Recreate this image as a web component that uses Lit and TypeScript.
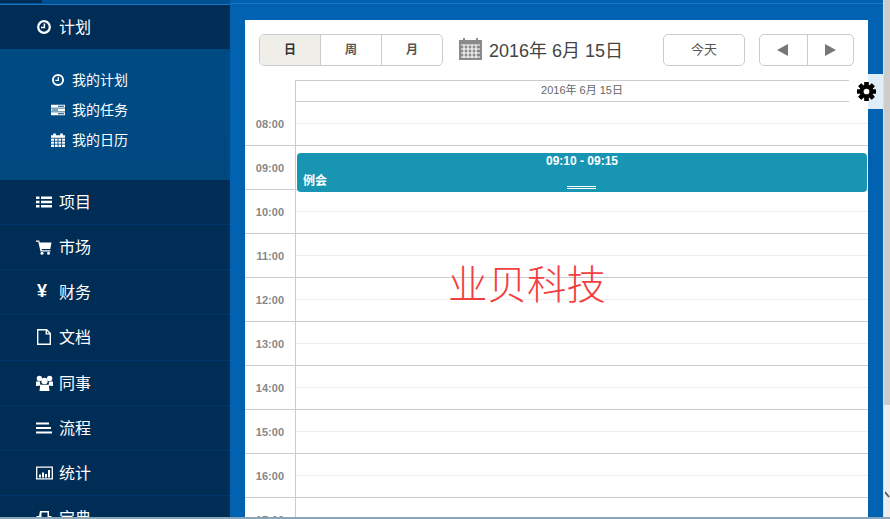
import { LitElement, html, css, svg } from "lit";
import { customElement } from "lit/decorators.js";

const clock = svg`<circle cx="8" cy="8" r="5.8" fill="none" stroke="#fff" stroke-width="2.2"/><path d="M8.400 4.500v4H5" fill="none" stroke="#fff" stroke-width="1.500"/>`;
const list = svg`<path fill="#fff" d="M0 2.500h3.500V5H0zM5 2.500h11V5H5zM0 6.800h3.500v2.500H0zM5 6.800h11v2.500H5zM0 11h3.500v2.500H0zM5 11h11v2.500H5z"/>`;
const cart = svg`<path fill="#fff" d="M0 1.500h3.200l.6 2H15.500l-1.200 6.500H5.700l.3 1.300H14.500v1.200H4.500L2.300 2.800H0z"/><circle cx="6" cy="14.300" r="1.500" fill="#fff"/><circle cx="12.500" cy="14.300" r="1.500" fill="#fff"/>`;
const doc = svg`<path fill="none" stroke="#fff" stroke-width="1.400" d="M1.700.7h9l3.600 3.800v10.800H1.700zM10.300.7v4.200h4"/>`;
const users = svg`<circle cx="3.400" cy="3.500" r="2.700" fill="#fff"/><circle cx="13.600" cy="3.500" r="2.700" fill="#fff"/><circle cx="8.500" cy="6" r="3.200" fill="#fff"/><path fill="#fff" d="M0 6.500h3.800L4.500 10.500 0 11zM13.200 6.500H17V11l-4.500-.5zM4.300 9.800h8.400l.8 6.200H3.500z"/>`;
const lines = svg`<path fill="#fff" d="M0 2.500h13v2H0zM0 7h15v2H0zM0 11.500h16v2H0z"/>`;
const chart = svg`<path fill="none" stroke="#fff" stroke-width="1.300" d="M.7 2.200h15.600v11.600H.7z"/><path fill="#fff" d="M3 9.500h2v3H3zM6 7.500h2v5H6zM9 9h2v3.500H9zM12 5h2v7.500h-2z"/>`;
const book = svg`<path fill="#fff" d="M4 1h9v5h2.500v7H.5V6H3zM5.500 2.500V8h6V2.500z"/>`;
const tasks = svg`<path fill="#fff" d="M0 2h16v3.400H0zM0 6.300h16v3.400H0zM0 10.600h16V14H0z"/><path stroke="#004a84" stroke-width="1.200" d="M8 3.700h7M1 8h7M8 12.300h7"/>`;
const cal = svg`<path fill="#fff" d="M0 2.500h2.500V.5h3v2h5v-2h3v2H16V16H0z"/><path stroke="#004a84" stroke-width="1" d="M0 6h16M0 9.400h16M0 12.800h16M4 6V16M8 6V16M12 6V16"/>`;

const HOURS = ["08:00", "09:00", "10:00", "11:00", "12:00", "13:00", "14:00", "15:00", "16:00", "17:00"];
const MENU = [
  { icon: list, label: "项目" },
  { icon: cart, label: "市场" },
  { yen: true, label: "财务" },
  { icon: doc, label: "文档" },
  { icon: users, label: "同事" },
  { icon: lines, label: "流程" },
  { icon: chart, label: "统计" },
  { icon: book, label: "宝典" },
];
const SUB = [
  { icon: clock, label: "我的计划" },
  { icon: tasks, label: "我的任务" },
  { icon: cal, label: "我的日历" },
];
const TEETH = [0, 45, 90, 135, 180, 225, 270, 315];

@customElement("app-root")
export class AppRoot extends LitElement {
  static styles = css`
    :host {
      display: block;
      width: 890px;
      height: 519px;
      overflow: hidden;
      position: relative;
      background: #0062b1;
      font-family: "Liberation Sans", "Noto Sans CJK SC", sans-serif;
    }
    .frame { display: flex; height: 517px; overflow: hidden; }
    .bottom { height: 2px; background: #8aa4b8; }
    .side { width: 230px; flex: none; display: flex; flex-direction: column; overflow: hidden; background: #002d56; }
    .topstrip { height: 5px; flex: none; background: #004f90; border-bottom: 1px solid #1a76c0; box-sizing: border-box; }
    .topstrip i { display: block; width: 42px; height: 3px; background: #002d56; }
    .head, .item {
      flex: none; display: flex; align-items: center; box-sizing: border-box;
      padding-left: 36px; color: #fff; font-size: 16px; gap: 7px;
    }
    .head { height: 44px; }
    .item { height: 45.150px; border-bottom: 1px solid #00386b; }
    .lab { padding-bottom: 2px; }
    .ic { width: 16px; height: 16px; flex: none; overflow: visible; }
    .yen { width: 16px; font: bold 18px "Liberation Sans", sans-serif; color: #fff; padding: 0 0 1px 1px; box-sizing: border-box; }
    .sub {
      flex: none; height: 131px; box-sizing: border-box; padding-top: 16px;
      background: linear-gradient(#004a84, #00497f);
    }
    .sub div { height: 30px; display: flex; align-items: center; padding-left: 51px; gap: 7px; color: #fff; font-size: 14px; }
    .sub .ic { width: 14px; height: 14px; }
    .main { flex: 1; min-width: 0; padding: 16px 22px 0 15px; display: flex; border-top: 1px solid #1a76c0; margin-top: 3px; box-sizing: border-box; }
    .card { flex: 1; background: #fff; padding-top: 14px; overflow: hidden; }
    .bar { display: flex; align-items: center; height: 32px; padding: 0 14px; margin-bottom: 14px; color: #444; }
    .group { display: flex; border: 1px solid #ccc; border-radius: 5px; height: 32px; box-sizing: border-box; overflow: hidden; }
    .group span { display: flex; align-items: center; justify-content: center; font-size: 12px; font-weight: bold; color: #555; border-left: 1px solid #ccc; box-sizing: border-box; padding-bottom: 3px; }
    .group span:first-child { border-left: 0; }
    .mode { width: 184px; }
    .mode span { flex: 1; }
    .mode span.on { background: #f0eee9; color: #333; }
    .title { display: flex; align-items: center; gap: 7px; margin-left: 16px; font-size: 18px; color: #444; flex: 1; }
    .title b { font-weight: normal; padding-bottom: 3px; }
    .title svg { margin-bottom: 2px; }
    .today { width: 82px; }
    .today span { width: 100%; font-weight: normal; font-size: 13px; color: #555; }
    .nav { width: 95px; margin-left: 14px; }
    .nav span { width: 47px; padding-bottom: 0; }
    .colhead { margin-left: 50px; height: 22px; box-sizing: border-box; border: solid #ccc; border-width: 1px 0 1px 1px; display: flex; align-items: center; justify-content: center; font-size: 11px; color: #666; padding-bottom: 4px; }
    .rows { position: relative; }
    .row { display: flex; height: 44px; box-sizing: border-box; border-bottom: 1px solid #ccc; }
    .hr { width: 50px; flex: none; display: flex; align-items: center; justify-content: flex-end; padding-right: 11px; box-sizing: border-box; font-size: 11px; font-weight: bold; color: #888; }
    .slot { flex: 1; border-left: 1px solid #ccc; display: flex; flex-direction: column; }
    .slot i { display: block; height: 22px; box-sizing: border-box; border-bottom: 1px solid #eee; }
    .event {
      position: absolute; left: 52px; right: 1px; top: 51px; height: 39px; box-sizing: border-box;
      background: #1895b2; border-radius: 4px; color: #fff; font-size: 12px; font-weight: bold;
    }
    .event .t { position: absolute; left: 0; right: 0; top: 1px; text-align: center; }
    .event .n { position: absolute; left: 6px; top: 18px; font-size: 12px; }
    .event .g { position: absolute; left: 270px; width: 29px; top: 33px; height: 3px; box-sizing: border-box; border: solid #fff; border-width: 1px 0; }
    .mark {
      position: absolute; left: 448px; top: 258px; font-size: 39.500px; line-height: 48px; color: #f33f3f;
      font-family: "Noto Sans CJK SC", serif; font-weight: 300; white-space: nowrap;
    }
    .gear {
      position: absolute; left: 849px; top: 74px; width: 34px; height: 35px; border-radius: 5px 0 0 5px;
      background: linear-gradient(90deg, #fff 19px, #e0ecf6 19px); display: flex; align-items: center; padding-left: 8px; box-sizing: border-box;
    }
    .scroll { position: absolute; right: 0; top: 0; width: 7px; height: 517px; background: #eee; border-left: 1px solid #ddd; box-sizing: border-box; }
    .scroll i { display: block; height: 405px; background: #ccc; }
    .scroll svg { position: absolute; left: 1px; top: 490px; }
  `;

  render() {
    return html`
      <div class="frame">
        <nav class="side">
          <div class="topstrip"><i></i></div>
          <div class="head"><svg class="ic" viewBox="0 0 16 16">${clock}</svg><span class="lab">计划</span></div>
          <div class="sub">
            ${SUB.map((s) => html`<div><svg class="ic" viewBox="0 0 16 16">${s.icon}</svg><span class="lab">${s.label}</span></div>`)}
          </div>
          ${MENU.map(
            (m) => html`<div class="item">
              ${m.yen ? html`<span class="yen">¥</span>` : html`<svg class="ic" viewBox="0 0 16 16">${m.icon}</svg>`}<span class="lab">${m.label}</span>
            </div>`
          )}
        </nav>
        <main class="main">
          <section class="card">
            <div class="bar">
              <div class="group mode"><span class="on">日</span><span>周</span><span>月</span></div>
              <div class="title">
                <svg width="23" height="22" viewBox="0 0 23 22">
                  <path fill="#8a8a8a" d="M0 2h4V0h2v2h11V0h2v2h4v20H0z" />
                  <path stroke="#fff" stroke-width="1.200" d="M2 7h19M2 11h19M2 15h19M2 19h19M5 7v13M9 7v13M13 7v13M17 7v13" />
                </svg>
                <b>2016年 6月 15日</b>
              </div>
              <div class="group today"><span>今天</span></div>
              <div class="group nav">
                <span><svg width="14" height="12" viewBox="0 0 14 12"><path fill="#777" d="M12 0v12L1 6z" /></svg></span>
                <span><svg width="14" height="12" viewBox="0 0 14 12"><path fill="#777" d="M2 0v12l11-6z" /></svg></span>
              </div>
            </div>
            <div class="colhead">2016年 6月 15日</div>
            <div class="rows">
              ${HOURS.map(
                (h) => html`<div class="row"><div class="hr">${h}</div><div class="slot"><i></i></div></div>`
              )}
              <div class="event">
                <div class="t">09:10 - 09:15</div>
                <div class="n">例会</div>
                <div class="g"></div>
              </div>
            </div>
          </section>
        </main>
      </div>
      <div class="bottom"></div>
      <div class="mark">业贝科技</div>
      <div class="gear">
        <svg width="19" height="19" viewBox="0 0 20 20">
          ${TEETH.map((a) => svg`<rect x="7.800" y="0" width="4.400" height="20" rx=".6" fill="#000" transform="rotate(${a} 10 10)"/>`)}
          <circle cx="10" cy="10" r="7.200" fill="#000"/>
          <circle cx="10" cy="10" r="3" fill="#fff"/>
        </svg>
      </div>
      <div class="scroll">
        <i></i>
        <svg width="6" height="10" viewBox="0 0 6 10"><path fill="none" stroke="#555" stroke-width="1.800" d="M0 2l4 5" /></svg>
      </div>
    `;
  }
}
